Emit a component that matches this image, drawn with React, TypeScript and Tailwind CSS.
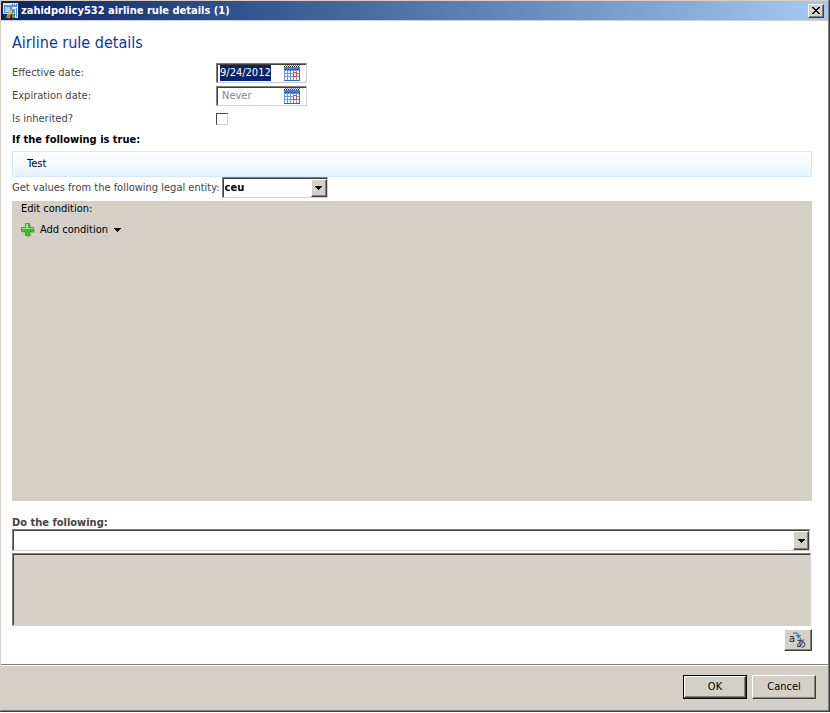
import { useEffect, useRef, useState } from "react"

const raised = "border border-t-white border-l-white border-r-[#404040] border-b-[#404040] bg-[#d4d0c8] shadow-[inset_-1px_-1px_0_#808080]"
const sunken = "border border-t-[#808080] border-l-[#808080] border-r-[#d4d0c8] border-b-[#d4d0c8] p-px shadow-[inset_1px_1px_0_#404040]"

function AppIcon() {
  return (
    <svg width="16" height="16" viewBox="0 0 16 16" aria-hidden="true">
      <rect x="0.5" y="0.5" width="14" height="10" fill="#5b93cf" stroke="#d7e0ea" />
      <path d="M1 1h13v1H1z" fill="#eef4fa" />
      <path d="M9 1h1v1H9zM11 1h1v1h-1zM13 1h1v1h-1z" fill="#4b6f9c" />
      <path d="M2 4h5v5H2z" fill="#a9cdf0" />
      <path d="M9.5 5.5V4.5h5v10h-2v-9z" fill="#5d93ca" stroke="#eef3f8" />
      <path d="M3 15h4c0-3 1-5 2-6V6C6 8 4 11 3 15z" fill="#f6b420" />
      <path d="M3 15h3l1-4-2 1z" fill="#e0562a" />
      <path d="M9 9v6h3v-2z" fill="#5cab3c" />
    </svg>
  )
}

function CalendarIcon() {
  return (
    <svg width="16" height="16" viewBox="0 0 16 16" shapeRendering="crispEdges" aria-hidden="true">
      <path d="M0 2h16v14H0z" fill="#6f98dc" />
      <path d="M0 2h16v2H0z" fill="#4a7ccf" />
      <path d="M0 4h16v1H0z" fill="#2f5fb8" />
      <path d="M0 1h1v1H0zM2 1h1v1H2zM4 1h1v1H4zM6 1h1v1H6zM8 1h1v1H8zM10 1h1v1h-1zM12 1h1v1h-1zM14 1h1v1h-1z" fill="#222" />
      <path d="M1 0h1v1H1zM3 0h1v1H3zM5 0h1v1H5zM7 0h1v1H7zM9 0h1v1H9zM11 0h1v1h-1zM13 0h1v1h-1zM15 0h1v1h-1z" fill="#777" />
      <path
        d="M1 6h2v2H1zM4 6h2v2H4zM7 6h2v2H7zM10 6h2v2h-2zM13 6h2v2h-2zM1 9h2v2H1zM4 9h2v2H4zM7 9h2v2H7zM13 9h2v2h-2zM1 12h2v3H1zM4 12h2v3H4zM7 12h2v3H7zM10 12h2v3h-2zM13 12h2v3h-2z"
        fill="#fff"
      />
      <path d="M0 15h16v1H0zM15 5h1v11h-1z" fill="#3c66b6" />
      <path d="M9 7h4v5H9z" fill="#f0441c" />
      <path d="M10 8h2v3h-2z" fill="#fff" />
    </svg>
  )
}

function PlusIcon() {
  return (
    <svg width="14" height="14" viewBox="0 0 14 14" aria-hidden="true">
      <path d="M6 2h4v4h4v4h-4v4H6v-4H2V6h4z" fill="#8d8a84" opacity="0.55" />
      <path d="M4.5 0.5h4v4h4v4h-4v4h-4v-4h-4v-4h4z" fill="#35c32c" stroke="#3aa636" />
      <path d="M5 1h2v4h5v1H1V5h4z" fill="#93ef7c" />
    </svg>
  )
}

function Arrow() {
  return (
    <svg width="7" height="4" viewBox="0 0 7 4" shapeRendering="crispEdges" aria-hidden="true">
      <path d="M0 0h7v1H0zM1 1h5v1H1zM2 2h3v1H2zM3 3h1v1H3z" fill="#000" />
    </svg>
  )
}

function TranslateIcon() {
  return (
    <svg width="18" height="18" viewBox="0 0 18 18" className="overflow-visible" aria-hidden="true">
      <path d="M4 2.5c3-1.500 5-.5 5.500 2" fill="none" stroke="#4a9ccc" strokeWidth="1.800" />
      <path d="M6.500 4h6L9.500 7.500z" fill="#2f86bd" />
      <text x="0" y="11" fontSize="11" fill="#222" fontFamily="DejaVu Sans Condensed, sans-serif">a</text>
      <text x="7" y="16" fontSize="10" fill="#222" fontFamily="Noto Sans CJK JP, sans-serif">あ</text>
    </svg>
  )
}

function DateField({ id, value, placeholder, focused }: { id: string; value?: string; placeholder?: string; focused?: boolean }) {
  const ref = useRef<HTMLInputElement>(null)
  useEffect(() => {
    if (focused) {
      ref.current?.focus()
      ref.current?.select()
    }
  }, [focused])

  return (
    <div className={`flex h-5 w-[91px] items-center bg-white ${sunken}`}>
      <input
        ref={ref}
        id={id}
        type="text"
        defaultValue={value}
        placeholder={placeholder}
        className="h-4 w-[66px] pl-0.5 text-black outline-none placeholder:pl-0.5 placeholder:text-[#858585] selection:bg-[#0a246a] selection:text-white"
      />
      <button type="button" aria-label="Choose date">
        <CalendarIcon />
      </button>
    </div>
  )
}

function Combo({ id, options, className }: { id: string; options: string[]; className: string }) {
  return (
    <div className={`relative bg-white ${sunken} ${className}`}>
      <select id={id} className="block h-full w-full appearance-none pl-px font-bold text-black outline-none">
        {options.map((o) => (
          <option key={o}>{o}</option>
        ))}
      </select>
      <span className={`pointer-events-none absolute top-px right-0 bottom-0 grid w-4 place-items-center ${raised}`}>
        <Arrow />
      </span>
    </div>
  )
}

export default function App() {
  const [inherited, setInherited] = useState(false)

  return (
    <div className="border-r border-b border-[#404040] font-['DejaVu_Sans_Condensed','DejaVu_Sans',sans-serif] text-[11px] leading-4 text-[#444]">
      <div className="flex flex-col border border-t-[#d4d0c8] border-r-[#808080] border-b-[#808080] border-l-[#d4d0c8] bg-white">
        <header className="flex h-5 items-center gap-0.5 border-b border-[#d4d0c8] bg-linear-to-r from-[#0a246a] to-[#a6caf0] pr-1 pl-0.5">
          <AppIcon />
          <h1 className="flex-1 font-bold text-white">zahidpolicy532 airline rule details (1)</h1>
          <button type="button" aria-label="Close" className={`grid h-[14px] w-4 place-items-center ${raised}`}>
            <svg width="8" height="7" viewBox="0 0 8 7" shapeRendering="crispEdges" aria-hidden="true">
              <path d="M0 0h2v1H0zM6 0h2v1H6zM1 1h2v1H1zM5 1h2v1H5zM2 2h4v1H2zM3 3h2v1H3zM2 4h4v1H2zM1 5h2v1H1zM5 5h2v1H5zM0 6h2v1H0zM6 6h2v1H6z" fill="#000" />
            </svg>
          </button>
        </header>

        <main className="flex flex-col pr-4 pl-[11px]">
          <h2 className="mt-3 text-[16px] leading-5 text-[#0a37a0]">Airline rule details</h2>

          <div className="mt-2.5 grid grid-cols-[204px_1fr] items-center gap-y-[3px]">
            <label htmlFor="effective">Effective date:</label>
            <DateField id="effective" value="9/24/2012" focused />
            <label htmlFor="expiration">Expiration date:</label>
            <DateField id="expiration" placeholder="Never" />
            <label htmlFor="inherited" className="leading-5">Is inherited?</label>
            <input
              id="inherited"
              type="checkbox"
              checked={inherited}
              onChange={(e) => setInherited(e.target.checked)}
              className="h-3 w-3 appearance-none border border-t-[#444] border-r-[#d4d0c8] border-b-[#d4d0c8] border-l-[#444] bg-white checked:bg-[#0a246a]"
            />
          </div>

          <h3 className="mt-[3px] font-bold text-black">If the following is true:</h3>
          <div className="mt-[3px] h-[26px] border border-[#d9e8f5] bg-linear-to-b from-white to-[#e6f2ff] pl-3.5 leading-6 text-black">Test</div>

          <div className="flex items-center gap-0.5">
            <label htmlFor="entity" className="whitespace-nowrap">Get values from the following legal entity:</label>
            <Combo id="entity" options={["ceu"]} className="h-[21px] w-[106px]" />
          </div>

          <section className="mt-[3px] min-h-[300px] bg-[#d4d0c8] pl-[9px] text-black">
            <p>Edit condition:</p>
            <button type="button" className="mt-[5px] flex items-center">
              <PlusIcon />
              <span className="ml-[5px]">Add condition</span>
              <span className="ml-1.5">
                <Arrow />
              </span>
            </button>
          </section>

          <label htmlFor="action" className="mt-[15px] font-bold leading-[13px]">Do the following:</label>
          <Combo id="action" options={[""]} className="mr-0.5 h-[22px]" />
          <div className={`mt-0.5 mr-px h-[73px] bg-[#d4d0c8] ${sunken}`} />
          <button type="button" aria-label="Translate" className={`mt-[3px] mb-[13px] grid h-[22px] w-7 place-items-center self-end ${raised}`}>
            <TranslateIcon />
          </button>
        </main>

        <footer className="flex h-[46px] items-start justify-end gap-[5px] border-t border-[#808080] bg-[#d4d0c8] pt-[10px] pr-3 text-black shadow-[inset_0_1px_0_#fff]">
          <div className="border border-black">
            <button type="button" className={`block h-[22px] w-[62px] ${raised}`}>OK</button>
          </div>
          <button type="button" className={`h-6 w-16 ${raised}`}>Cancel</button>
        </footer>
      </div>
    </div>
  )
}
